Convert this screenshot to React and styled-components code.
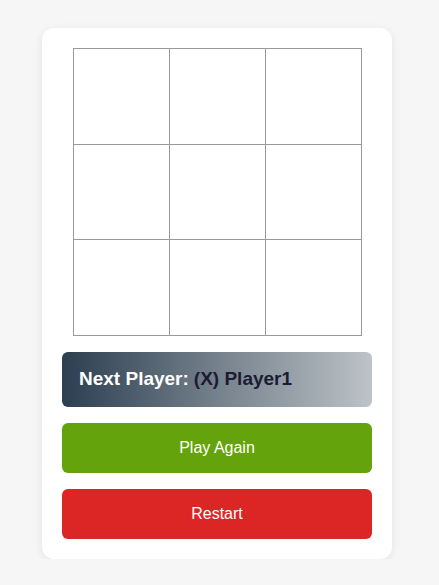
import React, {useState} from 'react';
import styled, {createGlobalStyle} from 'styled-components';

const Global = createGlobalStyle`
    html, body {
        margin: 0;
        padding: 0;
        background: #f6f6f6;
        font-family: "Liberation Sans", Arial, sans-serif;
    }
`;

const Page = styled.div`
    display: flex;
    justify-content: center;
    padding: 28px 5px 0 0;
`;

const Card = styled.div`
    width: 350px;
    box-sizing: border-box;
    padding: 20px;
    background: #fff;
    border-radius: 12px;
    box-shadow: 0 2px 10px rgba(0, 0, 0, 0.08);
    display: flex;
    flex-direction: column;
    gap: 16px;
`;

const Board = styled.div`
    align-self: center;
    display: grid;
    grid-template-columns: repeat(3, 96px);
    grid-template-rows: repeat(3, 95.67px);
    border-top: 1px solid #999;
    border-left: 1px solid #999;
`;

const Cell = styled.button`
    border: none;
    border-right: 1px solid #999;
    border-bottom: 1px solid #999;
    background: #fff;
    padding: 0;
    font-family: inherit;
    font-size: 48px;
    font-weight: bold;
    color: #2c3e50;
    cursor: pointer;
`;

const Status = styled.div`
    height: 55px;
    display: flex;
    align-items: center;
    padding: 0 17px;
    border-radius: 6px;
    background: linear-gradient(to right, #2c3e50, #bdc3c7);
    font-size: 19px;
    font-weight: bold;
    color: #fff;
`;

const Player = styled.span`
    color: #1c1b33;
    margin-left: 5px;
`;

const Button = styled.button`
    height: 50px;
    border: none;
    border-radius: 6px;
    background: ${({color}) => color};
    color: #fff;
    font-family: inherit;
    font-size: 16px;
    cursor: pointer;
`;

export default function App() {
    const [cells, setCells] = useState(Array(9).fill(''));
    const [xNext, setXNext] = useState(true);

    const play = (i) => {
        if (cells[i]) return;
        const next = cells.slice();
        next[i] = xNext ? 'X' : 'O';
        setCells(next);
        setXNext(!xNext);
    };

    const reset = () => {
        setCells(Array(9).fill(''));
        setXNext(true);
    };

    return (
        <Page>
            <Global/>
            <Card>
                <Board>
                    {cells.map((c, i) => (
                        <Cell key={i} onClick={() => play(i)}>{c}</Cell>
                    ))}
                </Board>
                <Status>
                    Next Player:
                    <Player>{xNext ? '(X) Player1' : '(O) Player2'}</Player>
                </Status>
                <Button color="#65a30d" onClick={reset}>Play Again</Button>
                <Button color="#dc2626" onClick={reset}>Restart</Button>
            </Card>
        </Page>
    );
}
